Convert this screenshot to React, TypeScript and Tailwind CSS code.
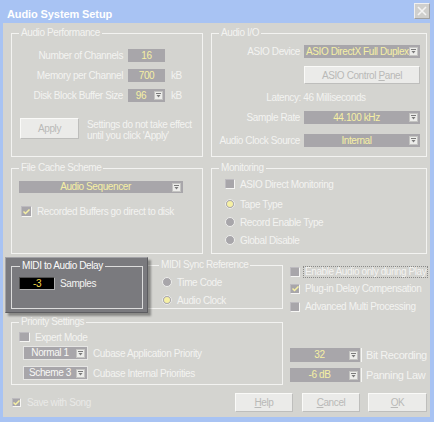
import React from 'react';

const BODY = 'bg-[#d4d4d0]';

const Arrow: React.FC = () => (
  <span className="flex h-[9px] w-[9px] shrink-0 items-center justify-center border border-[#c4c4c2] bg-[#ececea]">
    <svg width="5" height="5" viewBox="0 0 5 5">
      <path d="M0 0.5h5" stroke="#7a7a7a" strokeWidth="1" />
      <path d="M0.5 2h4L2.5 4.5z" fill="#7a7a7a" />
    </svg>
  </span>
);

const Dropdown: React.FC<{
  value: string;
  className: string;
  textClass?: string;
}> = ({ value, className, textClass = 'text-center text-[#f6f0a4]' }) => (
  <div className={`flex items-center bg-[#a8a6aa] pr-[2px] ${className}`}>
    <span className={`flex-1 truncate leading-[12px] ${textClass}`}>{value}</span>
    <Arrow />
  </div>
);

const Group: React.FC<{
  label: string;
  className: string;
  labelClass?: string;
  children?: React.ReactNode;
}> = ({ label, className, labelClass = `left-[7px] ${BODY}`, children }) => (
  <div className={`relative border border-[#f3f3f1] ${className}`}>
    <span className={`absolute top-[-7px] whitespace-nowrap px-[2px] leading-[12px] ${labelClass}`}>{label}</span>
    {children}
  </div>
);

const Check: React.FC<{ checked?: boolean; className?: string }> = ({ checked, className = 'h-[10px] w-[10px]' }) => (
  <span className={`flex shrink-0 items-center justify-center border border-t-[#bdbbbf] border-l-[#bdbbbf] border-r-[#f6f6f4] border-b-[#f6f6f4] bg-[#a8a6aa] ${className}`}>
    {checked && (
      <svg width="7" height="6" viewBox="0 0 7 6">
        <path d="M0.5 2.5l2 2 4-4" stroke="#f6f0a4" strokeWidth="1.5" fill="none" />
      </svg>
    )}
  </span>
);

const Radio: React.FC<{ on?: boolean }> = ({ on }) => (
  <span className="flex h-[10px] w-[10px] shrink-0 items-center justify-center rounded-full border border-[#eeeeec] bg-[#a8a6aa]">
    {on && <span className="h-[6px] w-[6px] rounded-full bg-[#f6f0a4]" />}
  </span>
);

const Button: React.FC<{ className: string; children: React.ReactNode }> = ({ className, children }) => (
  <div className={`flex items-center justify-center border border-t-[#fafaf8] border-l-[#fafaf8] border-r-[#bebebc] border-b-[#bebebc] bg-[#ebebe9] text-[#b9b9b7] ${className}`}>
    {children}
  </div>
);

const App: React.FC = () => {
  return (
    <div className="flex h-[422px] w-[434px] flex-col bg-[#a8c3f3] pb-[5px] pl-[3px] pr-[4px] font-['Liberation_Sans',Arial,sans-serif] text-[10px] tracking-[-0.4px] text-[#f3f3f1]">
      {/* title bar */}
      <div className="flex h-[23px] items-start justify-between pl-[4px] pt-[3px]">
        <span className="mt-[3px] text-[11px] font-bold tracking-[-0.1px] text-white">Audio System Setup</span>
        <span className="flex h-[16px] w-[16px] items-center justify-center border border-t-[#f0f0f0] border-l-[#f0f0f0] border-r-[#a0a0a0] border-b-[#a0a0a0] bg-[#cfcfcd]">
          <svg width="10" height="10" viewBox="0 0 10 10">
            <path d="M1 1l8 8M9 1l-8 8" stroke="#f4f4f4" strokeWidth="1.6" />
          </svg>
        </span>
      </div>

      <div className={`flex flex-1 flex-col pl-[8px] pr-[3px] pt-[10px] ${BODY}`}>
        {/* row 1 */}
        <div className="flex h-[124px] gap-[8px]">
          <Group label="Audio Performance" className="w-[192px]">
            <div className="flex flex-col pt-[15px]">
              {[
                ['Number of Channels', '16', ''],
                ['Memory per Channel', '700', 'kB'],
                ['Disk Block Buffer Size', '96', 'kB'],
              ].map(([l, v, u], i) => (
                <div key={l} className={`flex h-[13px] items-center ${i > 0 ? 'mt-[7px]' : ''}`}>
                  <span className="w-[111px] text-right">{l}</span>
                  {i === 2 ? (
                    <Dropdown value={v} className="ml-[5px] h-[13px] w-[37px]" />
                  ) : (
                    <span className="ml-[5px] flex h-[13px] w-[37px] items-center justify-center bg-[#a8a6aa] text-[#f6f0a4]">{v}</span>
                  )}
                  <span className="ml-[6px]">{u}</span>
                </div>
              ))}
              <div className="mt-[16px] flex items-start">
                <Button className="ml-[8px] h-[21px] w-[59px]">Apply</Button>
                <span className="ml-[8px] pt-[1px] leading-[11px]">
                  Settings do not take effect
                  <br />
                  until you click 'Apply'
                </span>
              </div>
            </div>
          </Group>

          <Group label="Audio I/O" className="flex-1">
            <div className="flex flex-col">
              <div className="mt-[11px] flex h-[13px] items-center">
                <span className="w-[88px] text-right">ASIO Device</span>
                <Dropdown
                  value="ASIO DirectX Full Duplex"
                  className="ml-[4px] h-[13px] w-[116px]"
                  textClass="pl-[2px] text-left text-[#f6f0a4]"
                />
              </div>
              <Button className="ml-[92px] mt-[8px] h-[18px] w-[116px]">
                <span>
                  ASIO Control <span className="underline">P</span>anel
                </span>
              </Button>
              <span className="mt-[8px] h-[12px] w-[208px] text-center leading-[12px]">Latency: 46 Milliseconds</span>
              <div className="mt-[7px] flex h-[13px] items-center">
                <span className="w-[88px] text-right">Sample Rate</span>
                <Dropdown value="44.100 kHz" className="ml-[4px] h-[13px] w-[116px]" />
              </div>
              <div className="mt-[10px] flex h-[13px] items-center">
                <span className="w-[88px] text-right">Audio Clock Source</span>
                <Dropdown value="Internal" className="ml-[4px] h-[13px] w-[116px]" />
              </div>
            </div>
          </Group>
        </div>

        {/* row 2 */}
        <div className="mt-[11px] flex h-[86px] gap-[8px]">
          <Group label="File Cache Scheme" className="w-[192px]">
            <div className="flex flex-col">
              <Dropdown value="Audio Sequencer" className="ml-[7px] mt-[12px] h-[12px] w-[164px]" />
              <div className="mt-[13px] flex h-[11px] items-center">
                <Check checked className="ml-[9px] h-[11px] w-[11px]" />
                <span className="ml-[5px]">Recorded Buffers go direct to disk</span>
              </div>
            </div>
          </Group>
          <Group label="Monitoring" className="flex-1">
            <div className="flex flex-col pl-[13px]">
              <div className="mt-[10px] flex h-[10px] items-center">
                <Check />
                <span className="ml-[5px]">ASIO Direct Monitoring</span>
              </div>
              {['Tape Type', 'Record Enable Type', 'Global Disable'].map((t, i) => (
                <div key={t} className={`flex h-[12px] items-center ${i === 0 ? 'mt-[9px]' : 'mt-[6px]'}`}>
                  <Radio on={i === 0} />
                  <span className="ml-[5px]">{t}</span>
                </div>
              ))}
            </div>
          </Group>
        </div>

        {/* row 3 */}
        <div className="mt-[3px] flex items-start">
          <div className="relative z-10 -ml-[6px] h-[56px] w-[143px] border border-t-[#a2a2a6] border-l-[#a2a2a6] border-r-[#5c5c60] border-b-[#5c5c60] bg-[#7a7a7e] shadow-[3px_3px_2px_rgba(0,0,0,0.35)]">
            <Group
              label="MIDI to Audio Delay"
              className="ml-[5px] mr-[4px] mt-[8px] h-[43px] !border-[#dcdcdc]"
              labelClass="left-[8px] bg-[#7a7a7e] text-[#fafafa]"
            >
              <div className="flex items-center pl-[7px] pt-[9px]">
                <span className="flex h-[13px] w-[36px] items-center justify-center border border-t-[#505050] border-l-[#505050] border-r-[#b0b0b0] border-b-[#b0b0b0] bg-black text-[#f6d84a]">
                  -3
                </span>
                <span className="ml-[5px]">Samples</span>
              </div>
            </Group>
          </div>
          <Group label="MIDI Sync Reference" className="-ml-[3px] mt-[8px] h-[44px] w-[138px]" labelClass={`left-[13px] ${BODY}`}>
            <div className="flex flex-col pl-[16px]">
              {['Time Code', 'Audio Clock'].map((t, i) => (
                <div key={t} className={`flex h-[12px] items-center ${i === 0 ? 'mt-[10px]' : 'mt-[6px]'}`}>
                  <Radio on={i === 1} />
                  <span className="ml-[5px]">{t}</span>
                </div>
              ))}
            </div>
          </Group>
          <div className="ml-[7px] flex min-w-0 flex-1 flex-col whitespace-nowrap">
            <div className="mt-[9px] flex h-[11px] items-center">
              <Check />
              <span className="ml-[3px] border border-dotted border-[#8a8a88] px-[1px] leading-[10px]">Enable Audio only during Play</span>
            </div>
            <div className="mt-[6px] flex h-[11px] items-center">
              <Check checked />
              <span className="ml-[5px]">Plug-in Delay Compensation</span>
            </div>
            <div className="mt-[7px] flex h-[11px] items-center">
              <Check />
              <span className="ml-[5px]">Advanced Multi Processing</span>
            </div>
          </div>
        </div>

        {/* row 4 */}
        <div className="mt-[9px] flex items-start">
          <Group label="Priority Settings" className="h-[63px] w-[272px]">
            <div className="flex flex-col">
              <div className="mt-[9px] flex h-[10px] items-center">
                <Check className="ml-[7px] h-[10px] w-[11px]" />
                <span className="ml-[5px]">Expert Mode</span>
              </div>
              <div className="mt-[4px] flex h-[14px] items-center">
                <Dropdown
                  value="Normal 1"
                  className="ml-[11px] h-[14px] w-[65px] border border-[#e6e6e4]"
                  textClass="text-center text-[#f8f8f6]"
                />
                <span className="ml-[5px]">Cubase Application Priority</span>
              </div>
              <div className="mt-[6px] flex h-[14px] items-center">
                <Dropdown
                  value="Scheme 3"
                  className="ml-[11px] h-[14px] w-[65px] border border-[#e6e6e4]"
                  textClass="text-center text-[#f8f8f6]"
                />
                <span className="ml-[5px]">Cubase Internal Priorities</span>
              </div>
            </div>
          </Group>
          <div className="ml-[7px] flex flex-col pt-[26px]">
            <div className="flex h-[14px] items-center">
              <Dropdown value="32" className="h-[14px] w-[70px]" />
              <span className="ml-[1px] h-[14px] w-px bg-[#f6f6f4]" />
              <span className="ml-[4px] text-[11px]">Bit Recording</span>
            </div>
            <div className="mt-[6px] flex h-[14px] items-center">
              <Dropdown value="-6 dB" className="h-[14px] w-[70px]" />
              <span className="ml-[1px] h-[14px] w-px bg-[#f6f6f4]" />
              <span className="ml-[4px] text-[11px]">Panning Law</span>
            </div>
          </div>
        </div>

        {/* row 5 */}
        <div className="mt-[8px] flex h-[19px] items-center">
          <Check checked className="ml-[1px] h-[9px] w-[9px]" />
          <span className="ml-[6px] text-[#e9e9e7]">Save with Song</span>
          <Button className="ml-auto h-[19px] w-[58px]">
            <span>
              <span className="underline">H</span>elp
            </span>
          </Button>
          <Button className="ml-[9px] h-[19px] w-[58px]">
            <span>
              <span className="underline">C</span>ancel
            </span>
          </Button>
          <Button className="ml-[8px] h-[19px] w-[59px]">
            <span>
              <span className="underline">O</span>K
            </span>
          </Button>
        </div>
      </div>
    </div>
  );
};

export default App;
